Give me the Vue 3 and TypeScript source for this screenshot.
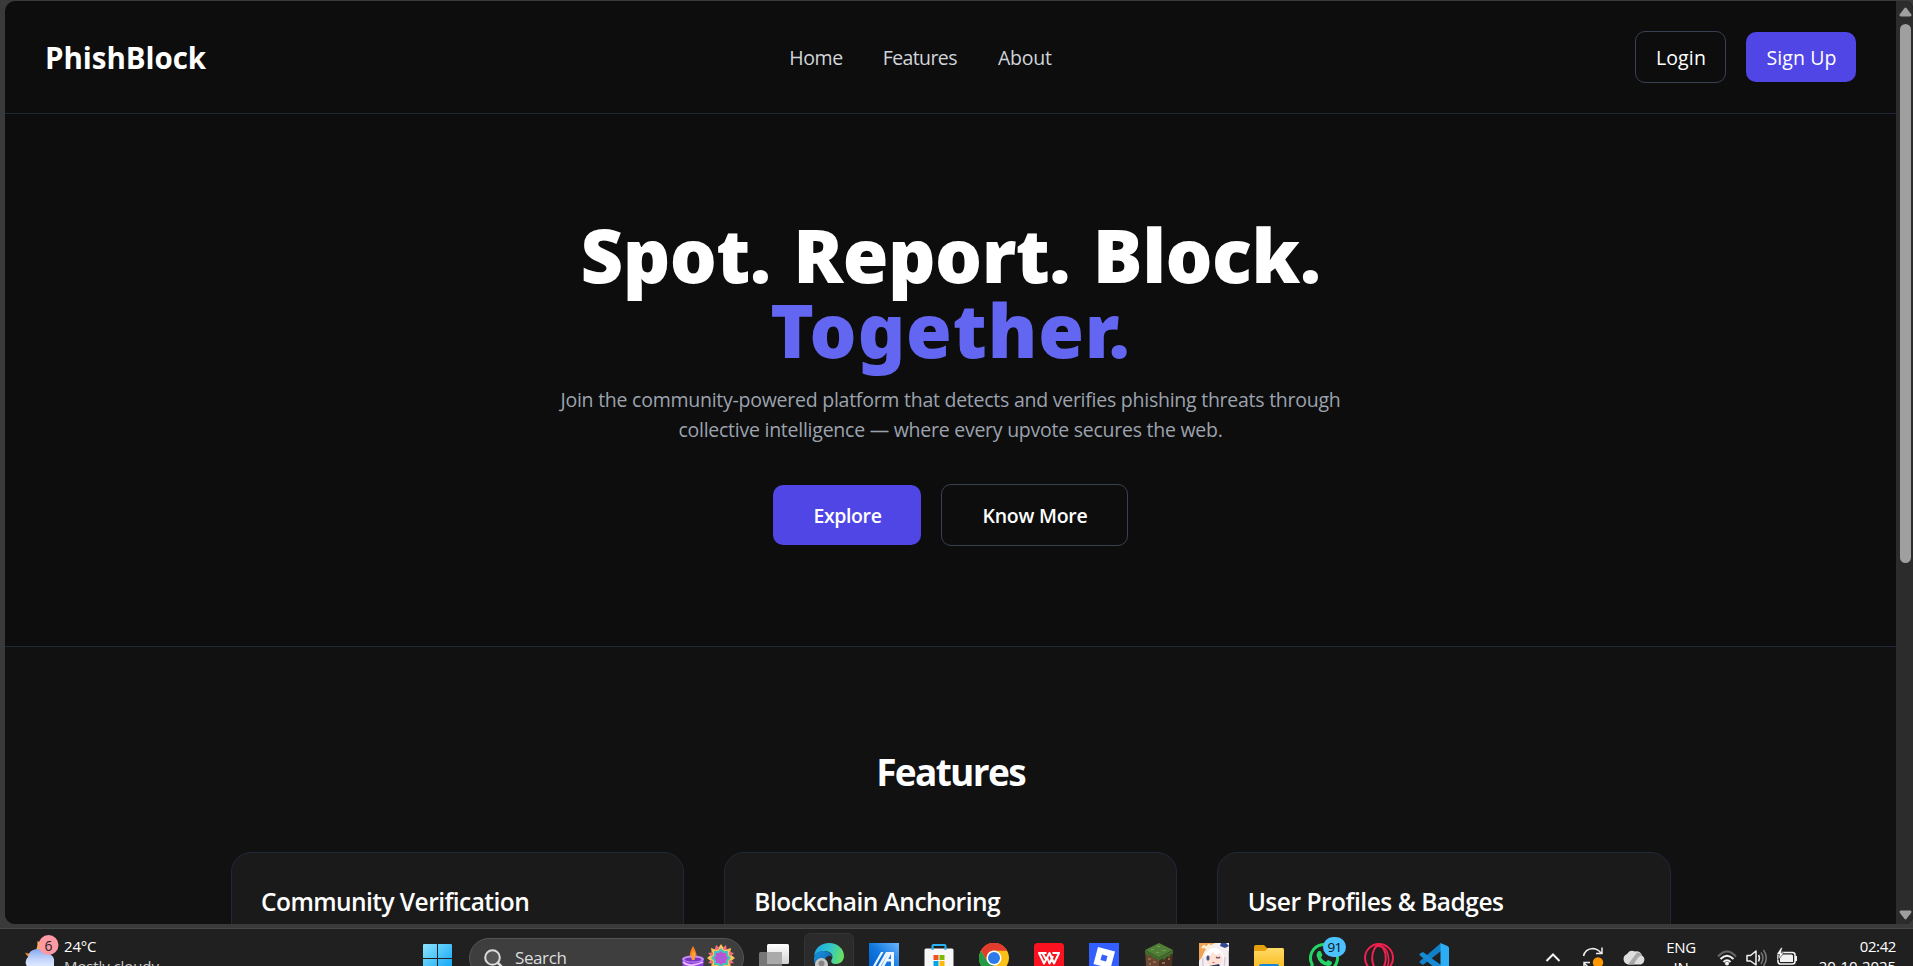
<script setup lang="ts">
interface Feature {
  title: string
  cls: string
}

const features: Feature[] = [
  { title: 'Community Verification', cls: 'community' },
  { title: 'Blockchain Anchoring', cls: 'chain' },
  { title: 'User Profiles & Badges', cls: 'profiles' },
]
</script>

<template>
  <div class="screen">
    <div class="window">
      <div class="page">
        <header class="header">
          <div class="logo">PhishBlock</div>
          <nav class="nav">
            <a class="home">Home</a>
            <a class="feat">Features</a>
            <a class="about">About</a>
          </nav>
          <div class="auth">
            <button class="btn outline login">Login</button>
            <button class="btn primary signup">Sign Up</button>
          </div>
        </header>

        <section class="hero">
          <h1>
            <span class="line">Spot. Report. Block.</span>
            <span class="line accent">Together.</span>
          </h1>
          <p>
            Join the community-powered platform that detects and verifies phishing threats through<br />
            collective intelligence — where every upvote secures the web.
          </p>
          <div class="cta">
            <button class="btn primary explore">Explore</button>
            <button class="btn outline more">Know More</button>
          </div>
        </section>

        <section class="features">
          <h2>Features</h2>
          <div class="cards">
            <article v-for="f in features" :key="f.title" class="card">
              <h3 :class="f.cls">{{ f.title }}</h3>
            </article>
          </div>
        </section>
      </div>

      <div class="scrollbar">
        <svg class="arrow" width="13" height="10" viewBox="0 0 13 10"><path d="M5.4 1.2Q6.5 0 7.6 1.2L12.2 7.3Q13 9.5 11 9.5H2Q0 9.5.8 7.3Z" fill="#9f9f9f" /></svg>
        <div class="thumb"></div>
        <svg class="arrow down" width="13" height="10" viewBox="0 0 13 10"><path d="M5.4 8.8Q6.5 10 7.6 8.8L12.2 2.7Q13 .5 11 .5H2Q0 .5.8 2.7Z" fill="#9f9f9f" /></svg>
      </div>
    </div>

    <footer class="taskbar">
      <div class="weather">
        <svg width="36" height="32" viewBox="0 0 36 32">
          <defs>
            <linearGradient id="moon" x1="0" y1="1" x2="1" y2="0"><stop offset="0" stop-color="#f47b12" /><stop offset="1" stop-color="#ffd23c" /></linearGradient>
            <linearGradient id="cloud" x1="0" y1="0" x2="0" y2="1"><stop offset="0" stop-color="#86a8ee" /><stop offset=".5" stop-color="#c3d4fb" /><stop offset="1" stop-color="#e8effd" /></linearGradient>
          </defs>
          <path d="M13.500 6Q14 14 10 17Q6 19.500 1 17.500Q4 24 11 23Q20 21 18 9Z" fill="url(#moon)" />
          <path d="M7 34a7 7 0 0 1-3-12 9 9 0 0 1 17-3 7 7 0 0 1 9 8v7z" fill="url(#cloud)" />
          <circle cx="24.500" cy="10" r="10" fill="#ff99a4" />
        </svg>
        <span class="count">6</span>
        <div class="wtext"><span class="temp">24°C</span><span class="cond">Mostly cloudy</span></div>
      </div>

      <svg class="start" width="29" height="29" viewBox="0 0 29 29">
        <defs><linearGradient id="win" x1="0" y1="0" x2="1" y2="1"><stop offset="0" stop-color="#8be4ff" /><stop offset="1" stop-color="#05a0f5" /></linearGradient></defs>
        <path d="M1 0H14V14H0V1Q0 0 1 0ZM15 0H28Q29 0 29 1V14H15ZM0 15H14V29H0ZM15 15H29V29H15Z" fill="url(#win)" />
      </svg>

      <div class="search">
        <svg width="20" height="20" viewBox="0 0 20 20" fill="none" stroke="#dcdcdc" stroke-width="2"><circle cx="8.500" cy="8.500" r="7.300" fill="#555" /><path d="M14 14l5 5" stroke-width="2.500" stroke-linecap="round" /></svg>
        <span class="slabel">Search</span>
        <svg class="festive" width="54" height="32" viewBox="0 0 54 32">
          <path d="M10 17Q7 11 12 3Q17 11 15 17Z" fill="#f6811f" /><path d="M12 16q-2-4 .5-8q3 5 1 8z" fill="#ffd65c" />
          <path d="M1 16Q1 30 12 30Q23 30 23 16Z" fill="#8b3fe0" />
          <ellipse cx="12" cy="16" rx="11" ry="3.500" fill="#c58bf7" /><ellipse cx="12" cy="16.500" rx="8.500" ry="2" fill="#7736bd" />
          <path d="M11 17Q9 13 12.500 8Q15 13 13.500 17Z" fill="#ff9c31" />
          <path d="M2 19q4 4 10 3t10-3" stroke="#e9baff" stroke-width="1.800" fill="none" />
          <g transform="translate(40 15)">
            <path d="M0-14 4-8 10-10 9-4 14 0 9 4 10 10 4 8 0 14-4 8-10 10-9 4-14 0-9-4-10-10-4-8Z" fill="#ffc34d" />
            <path d="M5-13 6-7 13-5 8 0 13 5 7 6 5 13 0 9-5 13-7 6-13 5-8 0-13-5-7-6-5-13 0-9Z" fill="#f0707f" />
            <path d="M0-13 3-8 8-8 8-3 13 0 8 3 8 8 3 8 0 13-3 8-8 8-8 3-13 0-8-3-8-8-3-8Z" fill="#ffc95a" />
            <path d="M0-10 3-7 7-7 7-3 10 0 7 3 7 7 3 7 0 10-3 7-7 7-7 3-10 0-7-3-7-7-3-7Z" fill="#43c4bd" />
            <path d="M0-7 2-5 5-5 5-2 7 0 5 2 5 5 2 5 0 7-2 5-5 5-5 2-7 0-5-2-5-5-2-5Z" fill="#c052d2" /><circle r="3" fill="#a061e0" />
          </g>
        </svg>
      </div>

      <div class="apps">
        <svg class="app" viewBox="0 0 30 30">
          <defs><linearGradient id="tv" x1="0" y1="0" x2="0" y2="1"><stop offset="0" stop-color="#fff" /><stop offset="1" stop-color="#d2d2d2" /></linearGradient></defs>
          <rect x="8" y="1" width="22" height="20" rx="1.500" fill="url(#tv)" /><rect x="0" y="9" width="23" height="20" rx="1.500" fill="#777" /><rect x="8" y="9" width="15" height="12" fill="#aaa" />
        </svg>

        <div class="active">
          <svg class="app" viewBox="0 0 30 30">
            <defs>
              <linearGradient id="edgeA" x1="0" y1=".3" x2="1" y2=".5"><stop offset="0" stop-color="#1aa4e8" /><stop offset=".55" stop-color="#35c8c5" /><stop offset="1" stop-color="#6be25a" /></linearGradient>
              <linearGradient id="edgeB" x1="0" y1="0" x2="1" y2="1"><stop offset="0" stop-color="#1594e0" /><stop offset="1" stop-color="#0a4f9e" /></linearGradient>
            </defs>
            <path d="M0 13C1 5 7 0 15 0C24 0 30 6 30 13C30 18 26 21 22 21C18 21 16 19 18 16C20 12 16 8 11 8C6 8 2 10 0 13Z" fill="url(#edgeA)" />
            <path d="M0 15C1 10 5 8 10 8C14 8 18 11 18 14C15 11 10 14 11 20C12 25 17 28 23 26C19 31 12 31 7 28C2 25 0 21 0 15Z" fill="url(#edgeB)" />
            <circle cx="7.500" cy="21.500" r="6.500" fill="#c5c5c5" /><circle cx="7.500" cy="20.500" r="3" fill="#858585" />
          </svg>
        </div>

        <svg class="app" viewBox="0 0 30 30">
          <defs><linearGradient id="asus" x1="0" y1="1" x2="1" y2="0"><stop offset="0" stop-color="#0058cc" /><stop offset=".5" stop-color="#1177df" /><stop offset="1" stop-color="#6db5fb" /></linearGradient></defs>
          <rect width="30" height="30" fill="url(#asus)" />
          <path d="M4 23 12 9H14.500L6.500 23ZM9 23 17 9H20L12 23ZM20 9H25V23H22V18.500H17L18.500 16H22V11L15.500 23H12.500Z" fill="#eef6ff" />
        </svg>

        <svg class="app" viewBox="0 0 30 30">
          <path d="M2 5.500H28Q29.500 5.500 29.500 7V27Q29.500 30 27 30H3Q.5 30 .5 27V7Q.5 5.500 2 5.500Z" fill="#f7f7f7" />
          <path d="M8.500 7V3Q8.500 2 9.500 2H20.500Q21.500 2 21.500 3V7" fill="none" stroke="#2bb3f3" stroke-width="2" />
          <path d="M9.500 12h5v5h-5z" fill="#f25022" /><path d="M15.500 12h5v5h-5z" fill="#7fba00" /><path d="M9.500 18h5v5h-5z" fill="#00a4ef" /><path d="M15.500 18h5v5h-5z" fill="#ffb900" />
        </svg>

        <svg class="app" viewBox="0 0 30 30">
          <circle cx="15" cy="15" r="15" fill="#fbc116" />
          <path d="M2 7.500A15 15 0 0 1 28 7.500H15Z" fill="#e33b2e" />
          <path d="M2 7.500 8.500 18.750 15 22.500 13 30A15 15 0 0 1 2 7.500Z" fill="#249a46" />
          <path d="M2 7.500A15 15 0 0 1 28 7.500H15A7.500 7.500 0 0 0 8.500 18.750Z" fill="#e33b2e" />
          <circle cx="15" cy="15" r="7.500" fill="#fff" /><circle cx="15" cy="15" r="6" fill="#2d7bea" />
        </svg>

        <svg class="app" viewBox="0 0 30 30">
          <rect width="30" height="30" rx="3.500" fill="#fb1220" />
          <path d="M12.500 10H5L10 20.500 15.500 10 20 20.500 25 10H18.500M8.500 10 11.500 15.500M13.500 15.500 15.500 20.500 19 13" fill="none" stroke="#fff" stroke-width="2" stroke-linejoin="round" />
        </svg>

        <svg class="app" viewBox="0 0 30 30"><rect width="30" height="30" fill="#335fff" /><path d="M9 4 26 8.500 21.500 25.500 4.500 21Z" fill="#fff" /><path d="M13 11.500 18.500 13 17 18.500 11.500 17Z" fill="#335fff" /></svg>

        <svg class="app" viewBox="0 0 30 30">
          <path d="M1 7 15 0 29 7 15 14.500Z" fill="#527f38" />
          <path d="M1 7 15 14.500V30L2 23Z" fill="#6a4732" /><path d="M29 7 15 14.500V30L28 23Z" fill="#4a2f22" />
          <path d="M1 7 15 14.500 29 7V10.500L26 12V14L23 13.500 20 17 18 15.500 15 18 12 15 9 15.500 7 12 4 13 1 10Z" fill="#3f6c2a" />
          <path d="M7 6h3v1H7zM13 3h3v1h-3zM18 7h4v1h-4zM12 9h3v1h-3z" fill="#6f9f4b" />
          <path d="M4 15h3v2H4zM9 18h3v2H9zM18 19h3v2h-3zM24 15h2v2h-2zM5 20h2v2H5z" fill="#92694b" />
        </svg>

        <svg class="app" viewBox="0 0 30 30">
          <rect width="30" height="30" fill="#f4eef0" /><path d="M0 0H16Q6 4 3 14L0 18Z" fill="#f1a253" /><path d="M3 5 5 3 7 5 10 2 13 5" stroke="#fff2d4" stroke-width="2" fill="none" />
          <path d="M22 0h5l3 3-4 2-5-2z" fill="#334a91" /><path d="M29 8h1v15h-1z" fill="#d4c6cc" />
          <path d="M6 11Q14 5 23 11Q25 17 21 21L14 24 8 20Z" fill="#ffe2d5" />
          <path d="M5 13Q10 5 15 5 24 5 26 18L21 10 17 12 14 9 9 14Z" fill="#fff" />
          <ellipse cx="9" cy="15" rx="1.600" ry="2.700" fill="#464f86" /><path d="M17 14q2 2 4 0" stroke="#67556c" stroke-width="1.200" fill="none" /><path d="M13 19h3l-1.500 1.500z" fill="#d85b62" />
          <path d="M4 15Q3 25 8 30M26 14Q26 25 22 30" stroke="#cfc5d5" stroke-width="1.200" fill="none" /><path d="M10 23 20 21 24 30H7Z" fill="#35385b" />
        </svg>

        <svg class="app" viewBox="0 0 30 30">
          <defs><linearGradient id="folder" x1="0" y1="0" x2="0" y2="1"><stop offset="0" stop-color="#ffdb67" /><stop offset="1" stop-color="#fab91b" /></linearGradient></defs>
          <path d="M0 4Q0 2 2 2H10L13 5H28Q30 5 30 7V15H0Z" fill="#e5a00b" /><path d="M0 8H11L14 5H28Q30 5 30 7V26H0Z" fill="url(#folder)" /><path d="M5 26V23Q5 21 7 21H23Q25 21 25 23V26Z" fill="#1683d8" />
        </svg>

        <div class="whats">
          <svg class="app" viewBox="0 0 30 30">
            <path d="M1.500 28.500 3.200 21.500A13.500 13.500 0 1 1 8.500 26.800Z" fill="none" stroke="#25d366" stroke-width="3" />
            <path d="M9.500 8 11.500 8 13.500 12 12 14.500Q14 18 17 19L19 17 23 19Q23 23 19 23Q10 22 7.500 12.500 7.500 9.500 9.500 8Z" fill="#25d366" />
          </svg>
          <span class="badge">91</span>
        </div>

        <svg class="app" viewBox="0 0 30 30" fill="none" stroke="#f1204f"><circle cx="15" cy="15" r="14" stroke-width="2" /><ellipse cx="15" cy="15" rx="6.800" ry="12.500" stroke-width="2" /><path d="M11 3.500Q23 1 24.500 15T11 26.500" stroke-width="1.600" /></svg>

        <svg class="app" viewBox="0 0 30 30">
          <path d="M22 0V8L4 22 1 20Q0 19 1 18Z" fill="#1180c9" /><path d="M4 9 1 10.500Q0 11.500 1 12.500L22 30V22Z" fill="#168bd4" />
          <path d="M21.500 0 28.500 3Q30 4 30 5V25Q30 26 28.500 27L21.500 30Z" fill="#2dadf5" />
        </svg>
      </div>

      <div class="tray">
        <svg width="100" height="37" viewBox="0 0 100 37" fill="none">
          <path d="M1.500 32 8 25.500 14.500 32" stroke="#f2f2f2" stroke-width="2" />
          <path d="M38.500 27Q40 20 48 19.500Q53 20 56 24M57 18.500V24.500H51" stroke="#eee" stroke-width="1.500" />
          <path d="M39 37V33.500H45M39 34l5 5" stroke="#eee" stroke-width="1.500" /><circle cx="53" cy="33.500" r="5.200" fill="#ff9800" />
          <path d="M83 35.500a5.500 5.500 0 0 1-1-10.500q3-5 8-2.500 5-1 7 4a5 5 0 0 1-1 9z" fill="#dedede" /><path d="M83 35.500 92 23.500q4 0 5 3-4 0-8 9z" fill="#a8a8a8" />
        </svg>
        <div class="lang"><span>ENG</span><span>IN</span></div>
        <svg class="status" width="84" height="37" viewBox="0 0 84 37" fill="none">
          <path d="M2 27.500Q11 17.500 20 27.500" stroke="#666" stroke-width="2" />
          <path d="M4.500 30Q11 23.500 17.500 30M7.500 33Q11 29.500 14.500 33" stroke="#f4f4f4" stroke-width="2" /><circle cx="11" cy="34.500" r="2" fill="#f4f4f4" />
          <path d="M31 26.500H34.500L40 22V36L34.500 32H31Z" stroke="#f2f2f2" stroke-width="1.500" stroke-linejoin="round" /><path d="M42.500 26Q44.500 29 42.500 32.500" stroke="#eee" stroke-width="1.500" /><path d="M45 23.500Q49 29 45 35M47.500 21Q53 29 47.500 37" stroke="#777" stroke-width="1.500" />
          <rect x="62" y="23.500" width="17" height="11.500" rx="2.500" stroke="#f2f2f2" stroke-width="1.600" /><path d="M66 25.500H75.500Q77 25.500 77 27V33H64V28Z" fill="#f2f2f2" /><path d="M80 27V32" stroke="#f2f2f2" stroke-width="2" />
          <path d="M65 18.500 60.500 25.500H63.500L62 31 68 24H65L66.500 18.500Z" fill="#fff" stroke="#202020" stroke-width=".6" />
        </svg>
        <div class="clock"><span class="time">02:42</span><span class="date">20-10-2025</span></div>
      </div>
    </footer>
  </div>
</template>

<style>
html,
body {
  margin: 0;
  overflow: hidden;
}
</style>

<style scoped>
* {
  box-sizing: border-box;
}
.screen {
  width: 1913px;
  height: 966px;
  overflow: hidden;
  display: flex;
  flex-direction: column;
  background: #3a3a3a;
  font-family: 'Open Sans', 'Noto Sans', sans-serif;
  color: #fff;
}
.window {
  flex: none;
  display: flex;
  height: 923px;
  margin: 1px 0 0 5px;
  border-radius: 10px 8px 8px 10px;
  overflow: hidden;
  background: #0d0d0d;
}
.page {
  width: 1891px;
  overflow: hidden;
}
.header {
  height: 113px;
  display: flex;
  align-items: center;
  justify-content: space-between;
  padding: 0 40px;
  border-bottom: 1px solid #1f2937;
}
.logo {
  padding-top: 1px;
  font-size: 29.5px;
  font-weight: 700;
  letter-spacing: -0.05px;
}
.nav {
  display: flex;
  gap: 40px;
  padding-top: 1px;
  font-size: 19.5px;
  color: #d1d5db;
}
.home {
  letter-spacing: -0.4px;
}
.feat {
  margin-right: 1px;
  letter-spacing: -0.6px;
}
.about {
  letter-spacing: -0.2px;
}
.auth,
.cta {
  display: flex;
  align-items: center;
  gap: 20px;
}
.btn {
  height: 50px;
  padding: 1px 0 0 1px;
  border: 0;
  border-radius: 10px;
  background: transparent;
  color: #fff;
  font-family: inherit;
  font-size: 19.5px;
}
.primary {
  background: #4f46e5;
}
.outline {
  border: 1px solid #374151;
}
.login {
  width: 91px;
  height: 52px;
  letter-spacing: 0.15px;
}
.signup {
  width: 110px;
  letter-spacing: 0.1px;
}
.hero {
  height: 533px;
  padding-top: 103px;
  border-bottom: 1px solid #1f2937;
  text-align: center;
}
h1,
h2,
h3,
p {
  margin: 0;
}
h1 {
  font-family: 'Noto Sans', 'Open Sans', sans-serif;
  font-size: 74px;
  line-height: 75px;
  font-weight: 900;
  letter-spacing: -0.55px;
  word-spacing: 4px;
}
.line {
  display: block;
}
.accent {
  color: #6366f1;
  letter-spacing: 0.9px;
}
p {
  margin-top: 18px;
  font-size: 19.5px;
  line-height: 30px;
  letter-spacing: -0.25px;
  color: #9ca3af;
}
.cta {
  margin-top: 39px;
  justify-content: center;
}
.cta .btn {
  padding-top: 0;
  font-weight: 600;
}
.explore {
  width: 148px;
  height: 60px;
  letter-spacing: -0.4px;
}
.more {
  width: 187px;
  height: 62px;
  letter-spacing: -0.25px;
}
.features {
  height: 277px;
  padding-top: 101px;
  background: #111;
}
h2 {
  font-size: 37px;
  line-height: 48px;
  font-weight: 700;
  letter-spacing: -1.65px;
  text-align: center;
}
.cards {
  width: 1440px;
  margin: 56px auto 0;
  display: grid;
  grid-template-columns: repeat(3, 1fr);
  gap: 40px;
}
.card {
  height: 220px;
  padding: 30px 30px 30px 29.5px;
  border: 1px solid #1f2937;
  border-radius: 20px;
  background: #1a1a1a;
}
h3 {
  font-size: 24.5px;
  line-height: 37px;
  font-weight: 600;
  white-space: nowrap;
}
.community {
  letter-spacing: -0.55px;
}
.chain {
  letter-spacing: -0.5px;
}
.profiles {
  letter-spacing: -0.48px;
}
.scrollbar {
  width: 17px;
  display: flex;
  flex-direction: column;
  align-items: center;
  padding: 6px 0 4px 2px;
  background: #2c2c2c;
}
.arrow {
  flex: none;
}
.thumb {
  width: 11px;
  height: 539px;
  margin-top: 7px;
  border-radius: 6px;
  background: #9f9f9f;
}
.down {
  margin-top: auto;
}
.taskbar {
  flex: none;
  height: 60px;
  margin-top: 4px;
  display: flex;
  align-items: flex-start;
  border-top: 1px solid #484848;
  background: #202020;
}
.weather {
  position: relative;
  display: flex;
  width: 398px;
  padding: 6px 0 0 24px;
}
.count {
  position: absolute;
  left: 38px;
  top: 6px;
  width: 21px;
  text-align: center;
  font-size: 14px;
  line-height: 21px;
  color: #222;
}
.wtext {
  margin: 1px 0 0 4px;
  font-size: 15px;
  line-height: 20px;
}
.wtext span,
.lang span,
.clock span {
  display: block;
}
.temp {
  letter-spacing: -0.2px;
}
.cond {
  letter-spacing: -0.1px;
  color: #ccc;
}
.start {
  margin: 15px 0 0 25px;
}
.search {
  display: flex;
  align-items: flex-start;
  width: 275px;
  height: 40px;
  margin: 9px 0 0 17px;
  padding-left: 14px;
  border: 1px solid #555;
  border-radius: 20px;
  background: #3e3e3e;
}
.search > svg:first-child {
  margin-top: 10px;
}
.slabel {
  margin: 8px 0 0 11px;
  width: 52px;
  font-size: 17px;
  line-height: 22px;
  letter-spacing: -0.4px;
  color: #ddd;
}
.festive {
  margin: 4px 0 0 114px;
}
.apps {
  display: flex;
  gap: 25px;
  margin: 14px 0 0 15px;
}
.app {
  display: block;
  width: 30px;
  height: 30px;
}
.active {
  margin: -10px;
  padding: 9px;
  border: 1px solid #333;
  border-radius: 6px;
  background: #2b2b2b;
}
.whats {
  position: relative;
}
.badge {
  position: absolute;
  left: 14px;
  top: -6px;
  width: 23px;
  height: 20px;
  border-radius: 10px;
  background: #4cc2ff;
  color: #111;
  font-size: 13.5px;
  line-height: 20px;
  letter-spacing: -0.8px;
  text-align: center;
}
.tray {
  display: flex;
  margin-left: 96px;
}
.lang {
  width: 34px;
  margin: 8px 0 0 19px;
  font-size: 15px;
  line-height: 20px;
  text-align: center;
  letter-spacing: -0.3px;
}
.status {
  margin-left: 18px;
}
.clock {
  width: 96px;
  margin-top: 7px;
  text-align: right;
  font-size: 15px;
  line-height: 20px;
}
.time {
  letter-spacing: -0.4px;
}
.date {
  letter-spacing: -0.1px;
}
</style>
